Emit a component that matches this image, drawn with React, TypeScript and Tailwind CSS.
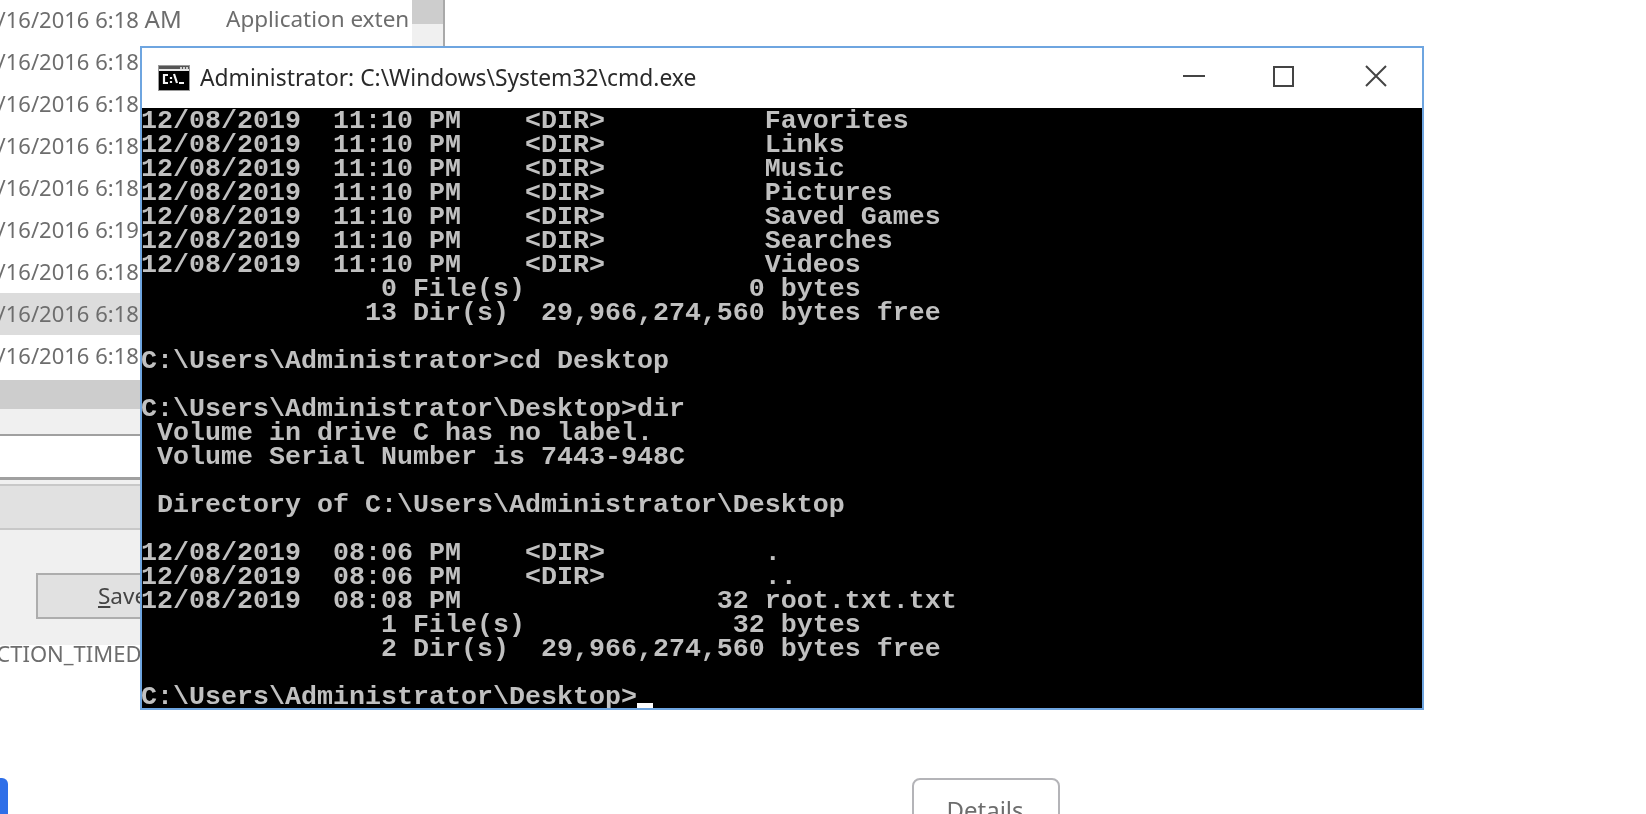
const consoleLines = [
  '12/08/2019  11:10 PM    <DIR>          Favorites',
  '12/08/2019  11:10 PM    <DIR>          Links',
  '12/08/2019  11:10 PM    <DIR>          Music',
  '12/08/2019  11:10 PM    <DIR>          Pictures',
  '12/08/2019  11:10 PM    <DIR>          Saved Games',
  '12/08/2019  11:10 PM    <DIR>          Searches',
  '12/08/2019  11:10 PM    <DIR>          Videos',
  '               0 File(s)              0 bytes',
  '              13 Dir(s)  29,966,274,560 bytes free',
  '',
  'C:\\Users\\Administrator>cd Desktop',
  '',
  'C:\\Users\\Administrator\\Desktop>dir',
  ' Volume in drive C has no label.',
  ' Volume Serial Number is 7443-948C',
  '',
  ' Directory of C:\\Users\\Administrator\\Desktop',
  '',
  '12/08/2019  08:06 PM    <DIR>          .',
  '12/08/2019  08:06 PM    <DIR>          ..',
  '12/08/2019  08:08 PM                32 root.txt.txt',
  '               1 File(s)             32 bytes',
  '               2 Dir(s)  29,966,274,560 bytes free',
  '',
];

const fileRows = ['6:18', '6:18', '6:18', '6:18', '6:18', '6:19', '6:18', '6:18', '6:18'];

function CmdIcon() {
  return (
    <svg width="32" height="26" viewBox="0 0 32 26">
      <rect x="0.5" y="0.5" width="31" height="25" fill="#000" stroke="#9a9a9a" />
      <rect x="1" y="1" width="30" height="3" fill="#555" />
      <rect x="22" y="2" width="2" height="2" fill="#ccc" />
      <rect x="25" y="2" width="2" height="2" fill="#ccc" />
      <rect x="28" y="2" width="2" height="2" fill="#ccc" />
      <rect x="1" y="4" width="30" height="2" fill="#e8e8e8" />
      <path d="M10 10H6v8h4M13 12v2M13 16v2M16 9l3 9M21 18h5" stroke="#f4f4f4" strokeWidth="2.2" fill="none" />
    </svg>
  );
}

export default function App() {
  return (
    <div className="relative h-[814px] w-[1646px] overflow-hidden bg-white font-['Noto_Sans',sans-serif] text-[#6d6d6d] blur-[0.5px]">
      {/* file dialog behind the console */}
      <div className="w-[445px]">
        <div className="flex h-[380px] border-r-2 border-[#a9a9a9] bg-white">
          <div className="mt-[-1px] flex w-[412px] flex-col overflow-hidden">
            {fileRows.map((time, i) => (
              <div
                key={i}
                className={`flex h-[42px] shrink-0 items-center whitespace-pre pb-[2px] text-[22px] ${i === 7 ? 'bg-[#dcdcdc]' : ''}`}
              >
                <span className="ml-[-15px] w-[241px]">
                  9/16/2016 {time} <span className="text-[24px]">AM</span>
                </span>
                {i === 0 && <span className="text-[22.5px]">Application exten</span>}
              </div>
            ))}
          </div>
          <div className="flex w-[31px] flex-col bg-[#f0f0f0]">
            <div className="h-[24px] bg-[#cdcdcd]" />
          </div>
        </div>
        <div className="h-[29px] bg-[#cdcdcd]" />
        <div className="h-[27px] border-b-2 border-[#a0a0a0] bg-[#f0f0f0]" />
        <div className="h-[41px] bg-white" />
        <div className="relative border-t-[3px] border-[#a0a0a0] bg-[#f0f0f0] pt-[4px]">
          <div className="h-[46px] border-y-2 border-[#c8c8c8] bg-[#e1e1e1]" />
          <div className="flex h-[115px] items-start pl-[36px] pt-[43px]">
            <div className="flex h-[46px] w-[200px] items-center border-2 border-[#adadad] bg-[#e1e1e1] pl-[60px] text-[22.5px] text-[#444]">
              <span>
                <span className="underline">S</span>ave
              </span>
            </div>
          </div>
        </div>
        <div className="ml-[-80px] mt-[-4px] whitespace-pre text-[22px] leading-[24px]">CONNECTION_TIMED_OUT</div>
      </div>

      {/* browser buttons at the bottom */}
      <div className="absolute left-[-40px] top-[778px] h-[60px] w-[48px] rounded-[6px] bg-[#2f6fe8]" />
      <div className="absolute left-[912px] top-[778px] flex h-[60px] w-[148px] justify-center rounded-[8px] border-2 border-[#b4b4b8] bg-white pr-[2px] pt-[14px] text-[24px] leading-[32px] text-[#6d6d6d]">
        Details
      </div>

      {/* console window */}
      <div className="absolute left-[140px] top-[46px] flex w-[1284px] flex-col border-2 border-[#6ea5e0] bg-black">
        <div className="flex h-[60px] items-center bg-white text-[#2a2a2a]">
          <div className="ml-[16px] mr-[10px] flex">
            <CmdIcon />
          </div>
          <span className="text-[22.8px]">Administrator: C:\Windows\System32\cmd.exe</span>
          <div className="mb-[4px] ml-auto mr-[35px] flex items-center text-[#444]">
            <svg width="22" height="22" viewBox="0 0 22 22" className="mr-[68px]">
              <path d="M0 11H22" stroke="currentColor" strokeWidth="2" />
            </svg>
            <svg width="21" height="21" viewBox="0 0 21 21" className="mr-[71px]">
              <rect x="1" y="1" width="19" height="19" fill="none" stroke="currentColor" strokeWidth="2" />
            </svg>
            <svg width="22" height="22" viewBox="0 0 22 22">
              <path d="M1 1L21 21M21 1L1 21" stroke="currentColor" strokeWidth="2" fill="none" />
            </svg>
          </div>
        </div>
        <div className="ml-[-1px] h-[600px] overflow-hidden whitespace-pre pt-[1px] font-['Liberation_Mono',monospace] text-[26.67px] font-bold leading-[24px] text-[#c0c0c0]">
          {consoleLines.map((line, i) => (
            <div key={i} className="h-[24px]">
              {line}
            </div>
          ))}
          <div className="flex h-[23px]">
            <span>C:\Users\Administrator\Desktop&gt;</span>
            <span className="mt-[18px] h-[5px] w-[16px] bg-white" />
          </div>
        </div>
      </div>
    </div>
  );
}
